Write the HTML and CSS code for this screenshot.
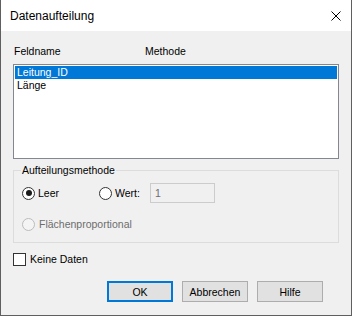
FILE: index.html
```html
<!DOCTYPE html>
<html lang="de">
<head>
    <meta charset="UTF-8">
    <title>Datenaufteilung</title>
    <link rel="stylesheet" href="styles.css">
</head>
<body>
    <div class="window">
        <div class="titlebar">
            <span class="title">Datenaufteilung</span>
            <svg class="close" width="10" height="10" viewBox="0 0 10 10">
                <path d="M0.5 0.5 L9.5 9.5 M9.5 0.5 L0.5 9.5" stroke="#000" stroke-width="1" fill="none"/>
            </svg>
        </div>

        <div class="content">
            <div class="list-header">
                <span class="col-name">Feldname</span>
                <span>Methode</span>
            </div>

            <div class="listbox">
                <div class="row selected">Leitung_ID</div>
                <div class="row">Länge</div>
            </div>

            <fieldset class="group">
                <legend>Aufteilungsmethode</legend>
                <div class="radio-row">
                    <label class="radio leer"><span class="dot checked"></span>Leer</label>
                    <label class="radio wert"><span class="dot"></span>Wert:</label>
                    <div class="textbox">1</div>
                </div>
                <div class="radio-row second">
                    <label class="radio disabled"><span class="dot"></span>Flächenproportional</label>
                </div>
            </fieldset>

            <label class="check"><span class="box"></span>Keine Daten</label>

            <div class="buttons">
                <button class="btn default">OK</button>
                <button class="btn">Abbrechen</button>
                <button class="btn">Hilfe</button>
            </div>
        </div>
    </div>
</body>
</html>
```

FILE: styles.css
```css
body {
    margin: 0;
    background: #f0f0f0;
}

.window {
    width: 352px;
    height: 316px;
    box-sizing: border-box;
    border: 1px solid #5f5f5f;
    border-top: none;
    background: #f0f0f0;
    font-family: "Liberation Sans", Arial, sans-serif;
    font-size: 10.5px;
    line-height: 13px;
    color: #000000;
}

.titlebar {
    height: 31px;
    background: #ffffff;
    display: flex;
    align-items: center;
    justify-content: space-between;
    padding: 0 10px 0 9px;
}

.title {
    font-size: 12px;
    line-height: 16px;
    margin-top: 1px;
}

.close {
    display: block;
    margin-top: 0px;
}

.content {
    padding: 0 12px;
}

.list-header {
    display: flex;
    margin-top: 14px;
    padding-left: 1px;
    height: 13px;
}

.col-name {
    width: 131px;
}

.listbox {
    margin-top: 6px;
    height: 95px;
    box-sizing: border-box;
    border: 1px solid #828790;
    background: #ffffff;
    padding: 1px;
}

.row {
    height: 13px;
    padding-left: 2px;
}

.row.selected {
    background: #0078d7;
    color: #ffffff;
}

.group {
    margin: 5px 0 0 0;
    padding: 6px 7px 11px 7px;
    border: 1px solid #dcdcdc;
}

.group legend {
    padding: 0 1px;
    line-height: 13px;
}

.radio-row {
    display: flex;
    align-items: center;
    height: 20px;
    margin-left: 1px;
}

.radio-row.second {
    height: 13px;
    margin-top: 15px;
}

.radio {
    display: flex;
    align-items: center;
}

.radio.leer {
    width: 77px;
}

.radio.wert {
    width: 51px;
}

.dot {
    width: 13px;
    height: 13px;
    box-sizing: border-box;
    border: 1px solid #333333;
    border-radius: 50%;
    background: #ffffff;
    margin-right: 3px;
    position: relative;
}

.dot.checked::after {
    content: "";
    position: absolute;
    left: 2.5px;
    top: 2.5px;
    width: 6px;
    height: 6px;
    border-radius: 50%;
    background: #1a1a1a;
}

.radio.disabled {
    color: #6d6d6d;
}

.radio.disabled .dot {
    border-color: #bcbcbc;
    background: #f4f4f4;
    margin-right: 4px;
}

.textbox {
    width: 65px;
    height: 20px;
    box-sizing: border-box;
    border: 1px solid #cccccc;
    background: #f0f0f0;
    color: #6d6d6d;
    padding: 3px 0 0 4px;
}

.check {
    display: flex;
    align-items: center;
    margin-top: 10px;
    height: 13px;
}

.box {
    width: 13px;
    height: 13px;
    box-sizing: border-box;
    border: 1px solid #333333;
    background: #ffffff;
    margin-right: 4px;
}

.buttons {
    display: flex;
    justify-content: flex-end;
    gap: 9px;
    margin-top: 15px;
    padding-right: 16px;
}

.btn {
    width: 66px;
    height: 21px;
    box-sizing: border-box;
    border: 1px solid #adadad;
    background: #e1e1e1;
    font-family: "Liberation Sans", Arial, sans-serif;
    font-size: 10.5px;
    color: #000000;
    padding: 0;
}

.btn.default {
    border: 2px solid #0078d7;
}
```
